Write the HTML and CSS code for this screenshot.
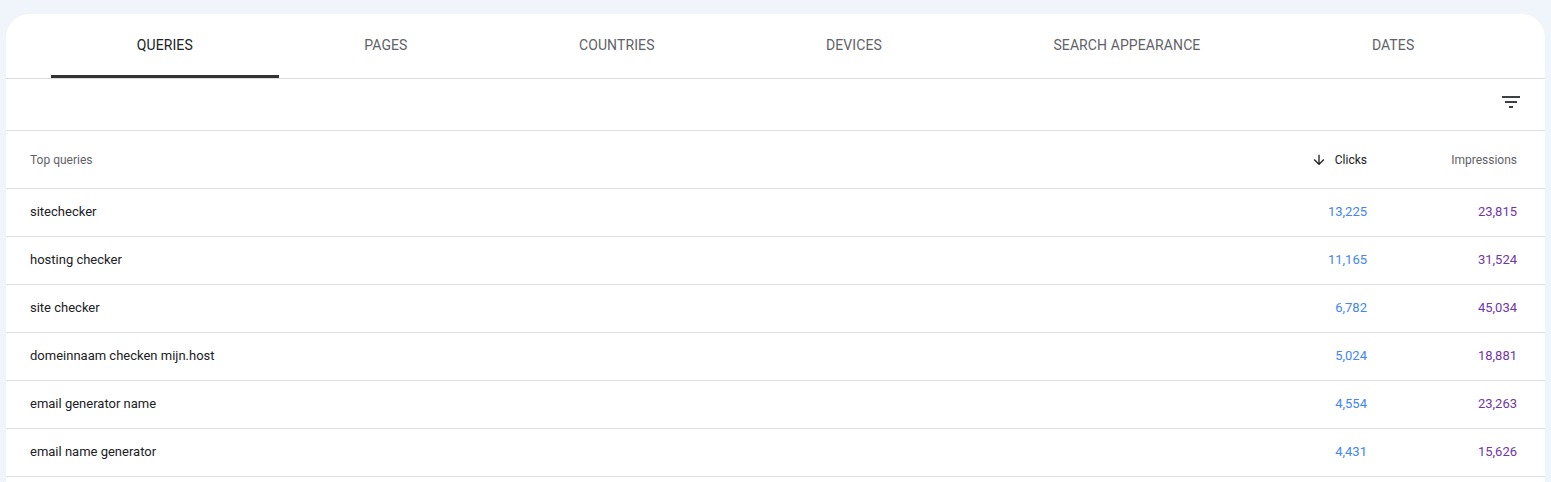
FILE: index.html
```html
<!DOCTYPE html>
<html>
<head>
<meta charset="utf-8">
<link rel="stylesheet" href="styles.css">
</head>
<body>
<div class="card">
  <div class="tabs">
    <div class="tab active">Queries</div>
    <div class="tab">Pages</div>
    <div class="tab">Countries</div>
    <div class="tab">Devices</div>
    <div class="tab">Search appearance</div>
    <div class="tab">Dates</div>
  </div>
  <div class="toolbar">
    <svg class="filter" viewBox="0 0 24 24" width="24" height="24"><path d="M10 18h4v-2h-4v2zM3 6v2h18V6H3zm3 7h12v-2H6v2z"/></svg>
  </div>
  <div class="row head">
    <div class="c-name">Top queries</div>
    <div class="c-num sorted"><svg class="arrow" viewBox="0 0 24 24" width="16" height="16"><path d="M20 12l-1.41-1.41L13 16.17V4h-2v12.17l-5.58-5.59L4 12l8 8 8-8z"/></svg>Clicks</div>
    <div class="c-num">Impressions</div>
  </div>
  <div class="row"><div class="c-name">sitechecker</div><div class="c-num clicks">13,225</div><div class="c-num impr">23,815</div></div>
  <div class="row"><div class="c-name">hosting checker</div><div class="c-num clicks">11,165</div><div class="c-num impr">31,524</div></div>
  <div class="row"><div class="c-name">site checker</div><div class="c-num clicks">6,782</div><div class="c-num impr">45,034</div></div>
  <div class="row"><div class="c-name">domeinnaam checken mijn.host</div><div class="c-num clicks">5,024</div><div class="c-num impr">18,881</div></div>
  <div class="row"><div class="c-name">email generator name</div><div class="c-num clicks">4,554</div><div class="c-num impr">23,263</div></div>
  <div class="row"><div class="c-name">email name generator</div><div class="c-num clicks">4,431</div><div class="c-num impr">15,626</div></div>
</div>
</body>
</html>
```
FILE: styles.css
```css
html, body {
  margin: 0;
  padding: 0;
  background: #f0f4fb;
  height: 100%;
  overflow: hidden;
}
body {
  padding: 14px 6px 0 6px;
  font-family: Roboto, "Noto Sans", Arial, sans-serif;
  color: #202124;
}
.card {
  background: #ffffff;
  border-radius: 24px 24px 0 0;
  min-height: 600px;
}
.tabs {
  display: flex;
  padding: 0 45px;
  height: 64px;
  border-bottom: 1px solid #dadce0;
}
.tab {
  flex: 1 1 auto;
  display: flex;
  align-items: center;
  justify-content: center;
  text-transform: uppercase;
  font-size: 14px;
  color: #5f6368;
  letter-spacing: 0.1px;
  border-bottom: 3px solid transparent;
  padding-top: 1px;
}
.tab.active {
  color: #202124;
  border-bottom-color: #333333;
}
.toolbar {
  height: 51px;
  display: flex;
  align-items: center;
  justify-content: flex-end;
  padding-right: 22px;
  border-bottom: 1px solid #e0e0e0;
}
.filter {
  fill: #3c4043;
  margin-top: -6px;
}
.row {
  display: grid;
  grid-template-columns: 1fr 150px 150px;
  align-items: center;
  height: 45px;
  padding: 0 28px 2px 24px;
  border-bottom: 1px solid #e0e0e0;
  font-size: 13px;
}
.row.head {
  height: 57px;
  padding-bottom: 0;
  font-size: 12px;
  color: #5f6368;
}
.c-num {
  text-align: right;
  display: flex;
  justify-content: flex-end;
  align-items: center;
}
.sorted {
  color: #202124;
}
.arrow {
  fill: #202124;
  margin-right: 8px;
}
.clicks { color: #4285f4; }
.impr { color: #7036a8; }
```
